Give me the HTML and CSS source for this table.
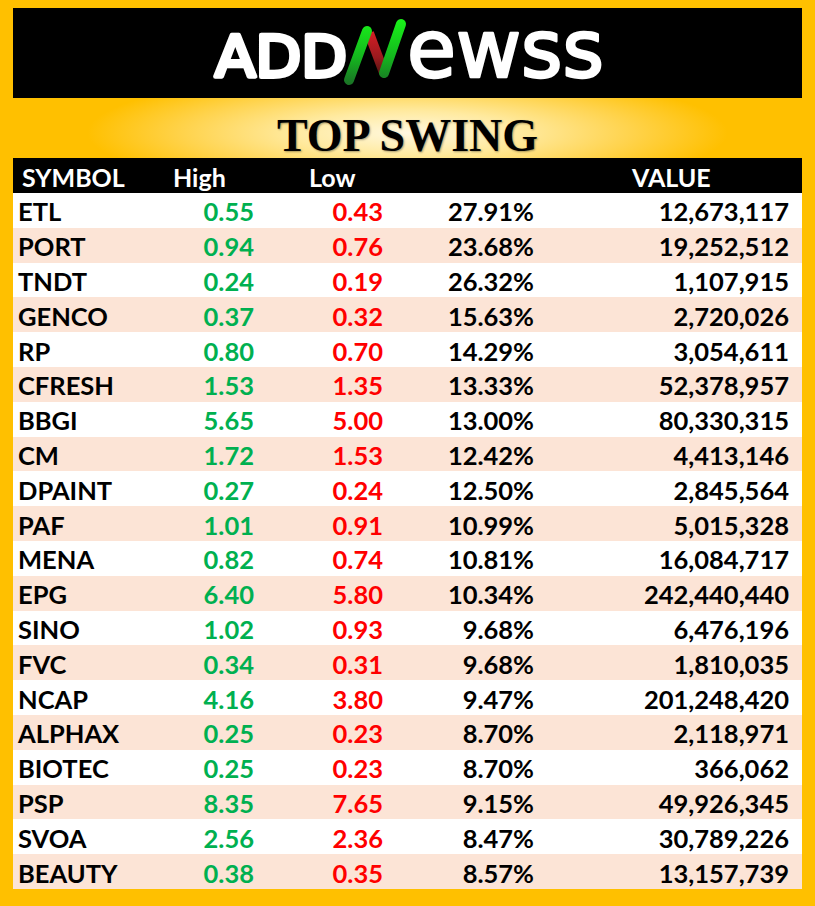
FILE: index.html
```html
<!DOCTYPE html>
<html lang="en">
<head>
<meta charset="utf-8">
<title>ADDNewss - Top Swing</title>
<link rel="stylesheet" href="styles.css">
</head>
<body>
<div class="page">
  <header class="brand">
    <svg class="logo" width="410" height="90" viewBox="200 8 410 90" role="img" aria-label="ADDNewss">
      <defs>
        <linearGradient id="gGreen" gradientUnits="userSpaceOnUse" x1="0" y1="20" x2="0" y2="86">
          <stop offset="0" stop-color="#19f019"/>
          <stop offset="0.55" stop-color="#14b81e"/>
          <stop offset="1" stop-color="#1b6e26"/>
        </linearGradient>
        <linearGradient id="gRed" gradientUnits="userSpaceOnUse" x1="0" y1="30" x2="0" y2="76">
          <stop offset="0" stop-color="#d81e26"/>
          <stop offset="0.6" stop-color="#9a1a1e"/>
          <stop offset="1" stop-color="#4e1410"/>
        </linearGradient>
      </defs>
      <text class="logo-caps" x="212" y="77" textLength="132" lengthAdjust="spacingAndGlyphs">ADD</text>
      <line x1="366" y1="33" x2="381" y2="73" stroke="url(#gRed)" stroke-width="10" stroke-linecap="butt"/>
      <line x1="346" y1="80" x2="364" y2="31" stroke="url(#gGreen)" stroke-width="10" stroke-linecap="round"/>
      <line x1="381" y1="73" x2="398" y2="24" stroke="url(#gGreen)" stroke-width="10" stroke-linecap="round"/>
      <text class="logo-small" x="404" y="77" textLength="197" lengthAdjust="spacingAndGlyphs">ewss</text>
    </svg>
  </header>
  <div class="title-band">
    <h1 class="title">TOP SWING</h1>
  </div>
  <div class="table">
    <div class="thead">
      <span class="th th-symbol">SYMBOL</span>
      <span class="th th-high">High</span>
      <span class="th th-low">Low</span>
      <span class="th th-value">VALUE</span>
    </div>
    <div class="row"><span class="sym">ETL</span><span class="num up">0.55</span><span class="num down">0.43</span><span class="num">27.91%</span><span class="num">12,673,117</span></div>
    <div class="row"><span class="sym">PORT</span><span class="num up">0.94</span><span class="num down">0.76</span><span class="num">23.68%</span><span class="num">19,252,512</span></div>
    <div class="row"><span class="sym">TNDT</span><span class="num up">0.24</span><span class="num down">0.19</span><span class="num">26.32%</span><span class="num">1,107,915</span></div>
    <div class="row"><span class="sym">GENCO</span><span class="num up">0.37</span><span class="num down">0.32</span><span class="num">15.63%</span><span class="num">2,720,026</span></div>
    <div class="row"><span class="sym">RP</span><span class="num up">0.80</span><span class="num down">0.70</span><span class="num">14.29%</span><span class="num">3,054,611</span></div>
    <div class="row"><span class="sym">CFRESH</span><span class="num up">1.53</span><span class="num down">1.35</span><span class="num">13.33%</span><span class="num">52,378,957</span></div>
    <div class="row"><span class="sym">BBGI</span><span class="num up">5.65</span><span class="num down">5.00</span><span class="num">13.00%</span><span class="num">80,330,315</span></div>
    <div class="row"><span class="sym">CM</span><span class="num up">1.72</span><span class="num down">1.53</span><span class="num">12.42%</span><span class="num">4,413,146</span></div>
    <div class="row"><span class="sym">DPAINT</span><span class="num up">0.27</span><span class="num down">0.24</span><span class="num">12.50%</span><span class="num">2,845,564</span></div>
    <div class="row"><span class="sym">PAF</span><span class="num up">1.01</span><span class="num down">0.91</span><span class="num">10.99%</span><span class="num">5,015,328</span></div>
    <div class="row"><span class="sym">MENA</span><span class="num up">0.82</span><span class="num down">0.74</span><span class="num">10.81%</span><span class="num">16,084,717</span></div>
    <div class="row"><span class="sym">EPG</span><span class="num up">6.40</span><span class="num down">5.80</span><span class="num">10.34%</span><span class="num">242,440,440</span></div>
    <div class="row"><span class="sym">SINO</span><span class="num up">1.02</span><span class="num down">0.93</span><span class="num">9.68%</span><span class="num">6,476,196</span></div>
    <div class="row"><span class="sym">FVC</span><span class="num up">0.34</span><span class="num down">0.31</span><span class="num">9.68%</span><span class="num">1,810,035</span></div>
    <div class="row"><span class="sym">NCAP</span><span class="num up">4.16</span><span class="num down">3.80</span><span class="num">9.47%</span><span class="num">201,248,420</span></div>
    <div class="row"><span class="sym">ALPHAX</span><span class="num up">0.25</span><span class="num down">0.23</span><span class="num">8.70%</span><span class="num">2,118,971</span></div>
    <div class="row"><span class="sym">BIOTEC</span><span class="num up">0.25</span><span class="num down">0.23</span><span class="num">8.70%</span><span class="num">366,062</span></div>
    <div class="row"><span class="sym">PSP</span><span class="num up">8.35</span><span class="num down">7.65</span><span class="num">9.15%</span><span class="num">49,926,345</span></div>
    <div class="row"><span class="sym">SVOA</span><span class="num up">2.56</span><span class="num down">2.36</span><span class="num">8.47%</span><span class="num">30,789,226</span></div>
    <div class="row"><span class="sym">BEAUTY</span><span class="num up">0.38</span><span class="num down">0.35</span><span class="num">8.57%</span><span class="num">13,157,739</span></div>
  </div>
</div>
</body>
</html>
```

FILE: styles.css
```css
* { box-sizing: border-box; }

html, body {
  margin: 0;
  padding: 0;
  background: #ffc000;
}

body {
  font-family: "Lato", "Liberation Sans", sans-serif;
}

.page {
  width: 815px;
  height: 906px;
  padding: 8px 13px 17px 13px;
  display: flex;
  flex-direction: column;
}

.brand {
  height: 90px;
  background: #000;
  display: flex;
  align-items: center;
  justify-content: center;
}

.logo {
  display: block;
  overflow: visible;
}

.logo-caps {
  font-family: "DejaVu Sans", sans-serif;
  font-weight: 400;
  font-size: 57px;
  fill: #fff;
  stroke: #fff;
  stroke-width: 4.5px;
  stroke-linejoin: round;
}

.logo-small {
  font-family: "DejaVu Sans", sans-serif;
  font-weight: 400;
  font-size: 80px;
  fill: #fff;
  stroke: #fff;
  stroke-width: 2.5px;
  stroke-linejoin: round;
}

.title-band {
  height: 60px;
  display: flex;
  align-items: flex-start;
  justify-content: center;
  padding-top: 15px;
  background: radial-gradient(ellipse 320px 62px at 50% 58%, #fff8e0 0%, #ffeaa0 35%, #ffd34c 70%, #ffc000 100%);
}

.title {
  margin: 0;
  font-family: "Liberation Serif", "Times New Roman", serif;
  font-weight: 700;
  font-size: 46px;
  line-height: 46px;
  color: #000;
  text-shadow: 1px 1px 2px rgba(0, 0, 0, 0.35);
}

.table {
  display: flex;
  flex-direction: column;
}

.thead {
  height: 35px;
  background: #000;
  color: #fff;
  display: flex;
  align-items: center;
  padding: 3px 0 0 9px;
  font-weight: 700;
  font-size: 25px;
}

.th-symbol { width: 151px; }
.th-high { width: 136px; }
.th-low { width: 323px; }

.row {
  height: 34.8px;
  display: grid;
  grid-template-columns: 150px 91px 129px 151px 1fr;
  align-items: center;
  padding: 2px 13px 0 0;
  font-weight: 700;
  font-size: 25.5px;
  color: #000;
  background: #fff;
}

.row:nth-child(odd) { background: #fce4d6; }

.sym {
  text-align: left;
  padding-left: 5px;
}
.num { text-align: right; }
.up { color: #00b050; }
.down { color: #ff0000; }
```
